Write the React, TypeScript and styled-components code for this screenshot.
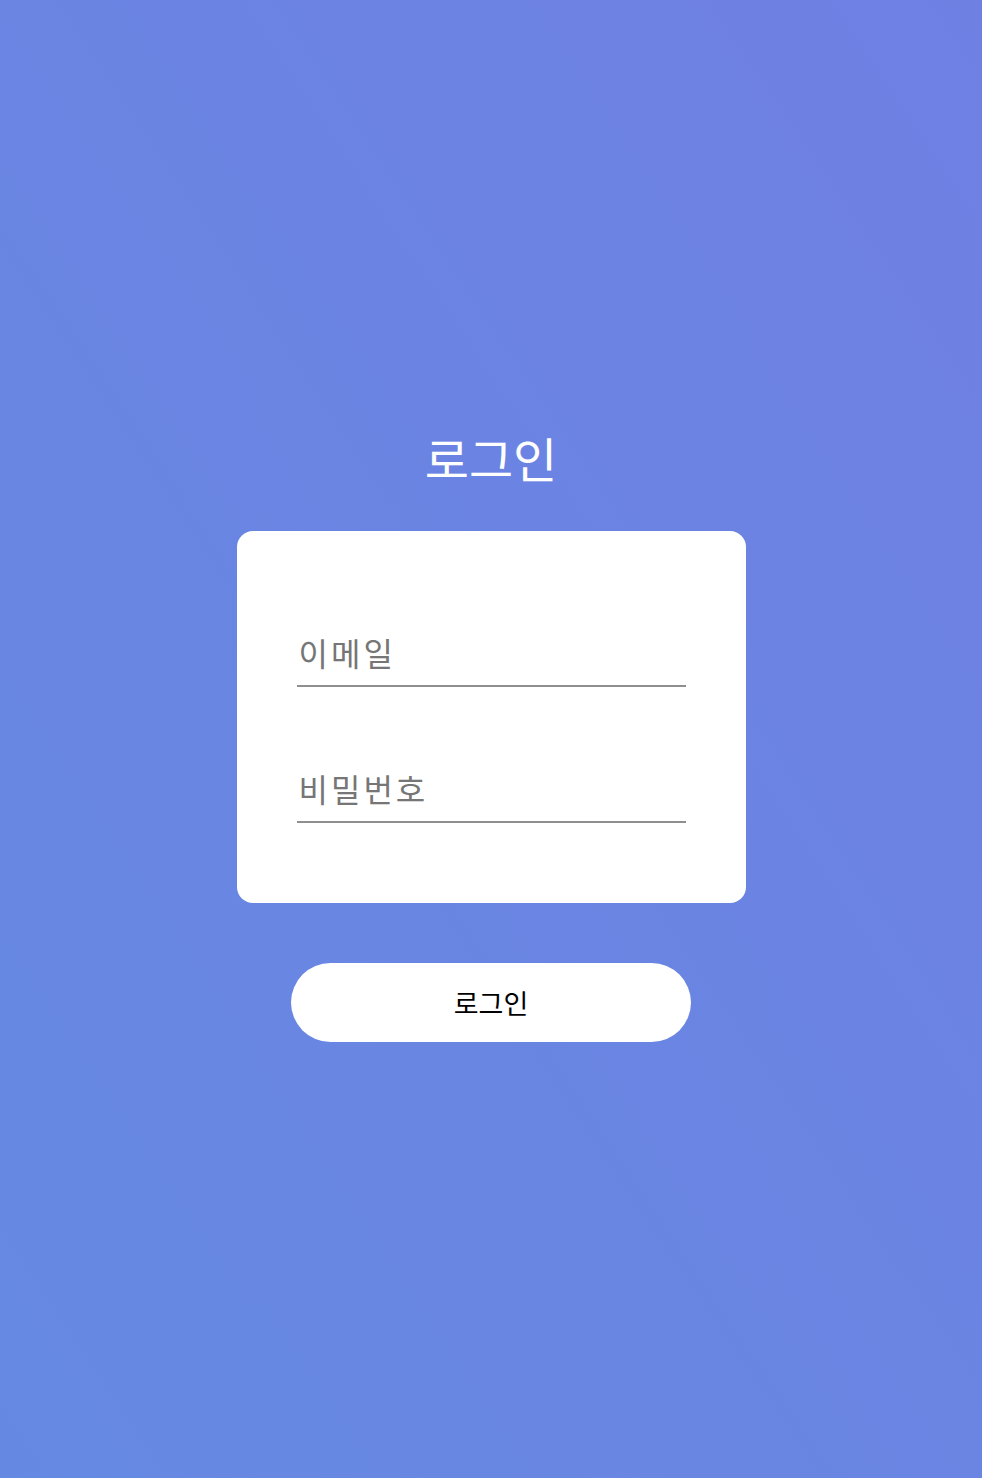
import React from 'react';
import styled, {createGlobalStyle} from 'styled-components';

const GlobalStyle = createGlobalStyle`
  html, body {
    margin: 0;
    padding: 0;
  }
  body {
    font-family: "Noto Sans CJK KR", "Noto Sans", sans-serif;
  }
  * {
    box-sizing: border-box;
  }
`;

const App = () => {
    return <Page>
        <GlobalStyle/>
        <Title>로그인</Title>
        <Card>
            <Field type="email" placeholder="이메일"/>
            <Field type="password" placeholder="비밀번호"/>
        </Card>
        <SubmitButton type="button">로그인</SubmitButton>
    </Page>;
};

export default App;



const Page = styled.div`
  min-height: 100vh;
  display: flex;
  flex-direction: column;
  align-items: center;
  justify-content: center;
  background: linear-gradient(to top right, #6589e2, #6f80e3);
`;

const Title = styled.h1`
  margin: 0 0 53px;
  font-size: 48px;
  font-weight: 400;
  line-height: 42px;
  color: #fff;
`;

const Card = styled.div`
  width: 509px;
  padding: 100px 60px 80px;
  display: flex;
  flex-direction: column;
  gap: 80px;
  background: #fff;
  border-radius: 16px;
`;

const Field = styled.input`
  width: 100%;
  height: 56px;
  padding: 3px 2px 15px;
  border: none;
  border-bottom: 2px solid #8f8f8f;
  outline: none;
  font-family: inherit;
  font-size: 32px;
  color: #333;
  background: transparent;

  &::placeholder {
    color: #767676;
    letter-spacing: 3px;
  }
`;

const SubmitButton = styled.button`
  margin-top: 60px;
  width: 400px;
  height: 79px;
  border: none;
  border-radius: 40px;
  background: #fff;
  font-family: inherit;
  font-size: 27px;
  color: #000;
  cursor: pointer;
`;
